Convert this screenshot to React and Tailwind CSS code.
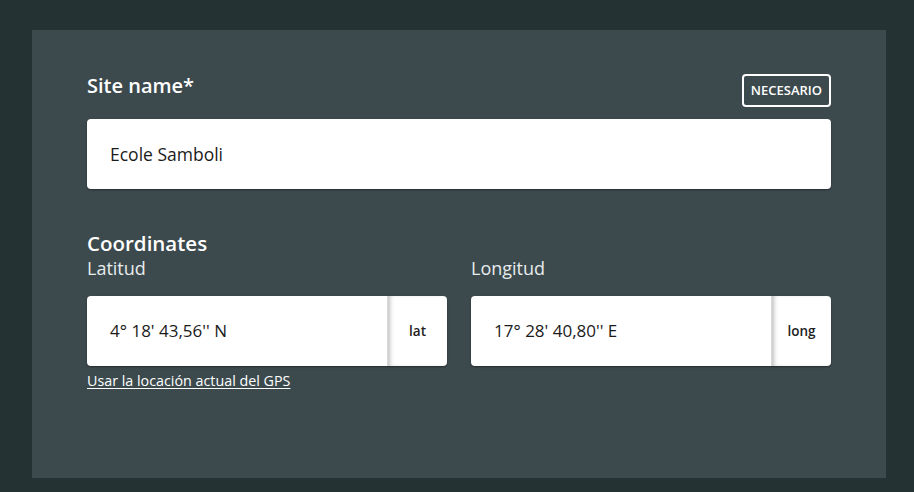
const SuffixInput = ({ value, suffix }) => (
  <div className="flex h-[70px] bg-white rounded-[4px] shadow-[0_1px_2px_rgba(0,0,0,0.4)] overflow-hidden">
    <div className="flex-1 flex items-center pl-[23px] text-[17px] text-[#1b1b1b]">{value}</div>
    <div className="w-[60px] flex items-center justify-center text-[13.5px] font-semibold text-[#222] shadow-[inset_4px_0_4px_-2px_rgba(0,0,0,0.25)] border-l border-[#d8d8d8]">
      {suffix}
    </div>
  </div>
);

export default function App() {
  return (
    <div className="min-h-[492px] bg-[#253234] pt-[30px] pl-[32px] pr-[28px] pb-[14px] font-['Open_Sans',sans-serif]">
      <div className="bg-[#3c4a4e] h-[448px] pl-[55px] pr-[55px] pt-[43px]">
        <div className="flex items-start justify-between">
          <div className="text-white font-semibold text-[20px] leading-[26px]">Site name*</div>
          <div className="mt-[1px] border-2 border-white rounded-[4px] px-[7px] h-[33px] flex items-center text-white text-[13px] font-semibold">
            NECESARIO
          </div>
        </div>
        <div className="mt-[12px] h-[70px] bg-white rounded-[4px] shadow-[0_1px_2px_rgba(0,0,0,0.4)] flex items-center pl-[23px] text-[17.5px] text-[#1b1b1b]">
          Ecole Samboli
        </div>

        <div className="mt-[41px] text-white font-semibold text-[20.5px] leading-[26px]">Coordinates</div>
        <div className="grid grid-cols-2 gap-x-[24px]">
          <div>
            <div className="text-[#e8eced] text-[18px] leading-[24px]">Latitud</div>
            <div className="mt-[16px]">
              <SuffixInput value={`4° 18' 43,56'' N`} suffix="lat" />
            </div>
            <a href="#" className="inline-block mt-[6px] text-white text-[14.3px] leading-[18px] underline underline-offset-2">
              Usar la locación actual del GPS
            </a>
          </div>
          <div>
            <div className="text-[#e8eced] text-[18px] leading-[24px]">Longitud</div>
            <div className="mt-[16px]">
              <SuffixInput value={`17° 28' 40,80'' E`} suffix="long" />
            </div>
          </div>
        </div>
      </div>
    </div>
  );
}
